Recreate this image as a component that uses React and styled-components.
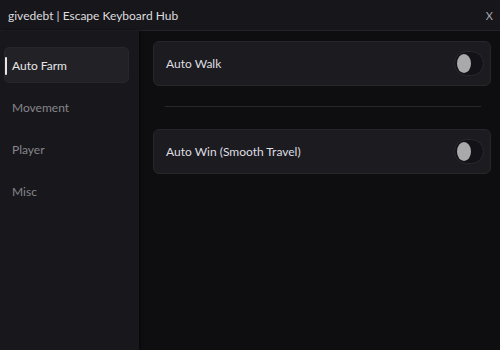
import React, { useState } from "react";
import styled, { createGlobalStyle } from "styled-components";

const Global = createGlobalStyle`
  html, body { margin: 0; padding: 0; background: #0e0e11; }
  body { font-family: "Lato", "Noto Sans", sans-serif; }
  * { box-sizing: border-box; }
`;

const Window = styled.div`
  width: 500px;
  height: 350px;
  display: flex;
  flex-direction: column;
  background: #0e0e11;
  overflow: hidden;
`;

const TitleBar = styled.div`
  height: 31px;
  flex: none;
  display: flex;
  align-items: center;
  justify-content: space-between;
  padding: 0 7px 0 8px;
  background: #17161b;
  border-bottom: 1px solid #242328;
`;

const Title = styled.div`
  color: #dcdcde;
  font-size: 12px;
`;

const Close = styled.div`
  color: #a8a8ac;
  font-size: 11px;
`;

const Body = styled.div`
  flex: 1;
  display: flex;
  min-height: 0;
`;

const Sidebar = styled.div`
  width: 139px;
  flex: none;
  background: #18171c;
  padding: 16px 10px 0 4px;
  display: flex;
  flex-direction: column;
  gap: 6px;
  box-shadow: 1px 0 3px rgba(0, 0, 0, 0.6);
  position: relative;
  z-index: 1;
`;

const Tab = styled.div`
  height: 36px;
  display: flex;
  align-items: center;
  padding-left: 7px;
  border-radius: 5px;
  position: relative;
  font-size: 12px;
  color: ${(p) => (p.$active ? "#e6e6e8" : "#86868b")};
  background: ${(p) => (p.$active ? "#222126" : "transparent")};
  border: 1px solid ${(p) => (p.$active ? "#27262b" : "transparent")};
  &::before {
    content: "";
    display: ${(p) => (p.$active ? "block" : "none")};
    position: absolute;
    left: 0;
    top: 9px;
    width: 2px;
    height: 18px;
    background: #e6e6e8;
    border-radius: 1px;
  }
`;

const Content = styled.div`
  flex: 1;
  padding: 10px 9px 0 14px;
  display: flex;
  flex-direction: column;
`;

const Card = styled.div`
  height: 45px;
  display: flex;
  align-items: center;
  justify-content: space-between;
  padding: 0 6px 0 12px;
  background: #1c1b20;
  border: 1px solid #27262b;
  border-radius: 6px;
`;

const Label = styled.div`
  color: #dedee0;
  font-size: 12px;
`;

const Track = styled.div`
  width: 30px;
  height: 25px;
  border-radius: 13px;
  background: #131216;
  border: 1px solid #29282d;
  display: flex;
  align-items: center;
  padding-left: 2px;
  cursor: pointer;
`;

const Knob = styled.div`
  width: 14px;
  height: 19px;
  border-radius: 50%;
  background: #a9a9ac;
`;

const Divider = styled.div`
  height: 1px;
  background: #29292d;
  margin: 20px 10px 22px 12px;
`;

function Toggle() {
  return (
    <Track>
      <Knob />
    </Track>
  );
}

export default function App() {
  const [active, setActive] = useState("Auto Farm");
  const tabs = ["Auto Farm", "Movement", "Player", "Misc"];
  return (
    <>
      <Global />
      <Window>
        <TitleBar>
          <Title>givedebt | Escape Keyboard Hub</Title>
          <Close>X</Close>
        </TitleBar>
        <Body>
          <Sidebar>
            {tabs.map((t) => (
              <Tab key={t} $active={t === active} onClick={() => setActive(t)}>
                {t}
              </Tab>
            ))}
          </Sidebar>
          <Content>
            <Card>
              <Label>Auto Walk</Label>
              <Toggle />
            </Card>
            <Divider />
            <Card>
              <Label>Auto Win (Smooth Travel)</Label>
              <Toggle />
            </Card>
          </Content>
        </Body>
      </Window>
    </>
  );
}
